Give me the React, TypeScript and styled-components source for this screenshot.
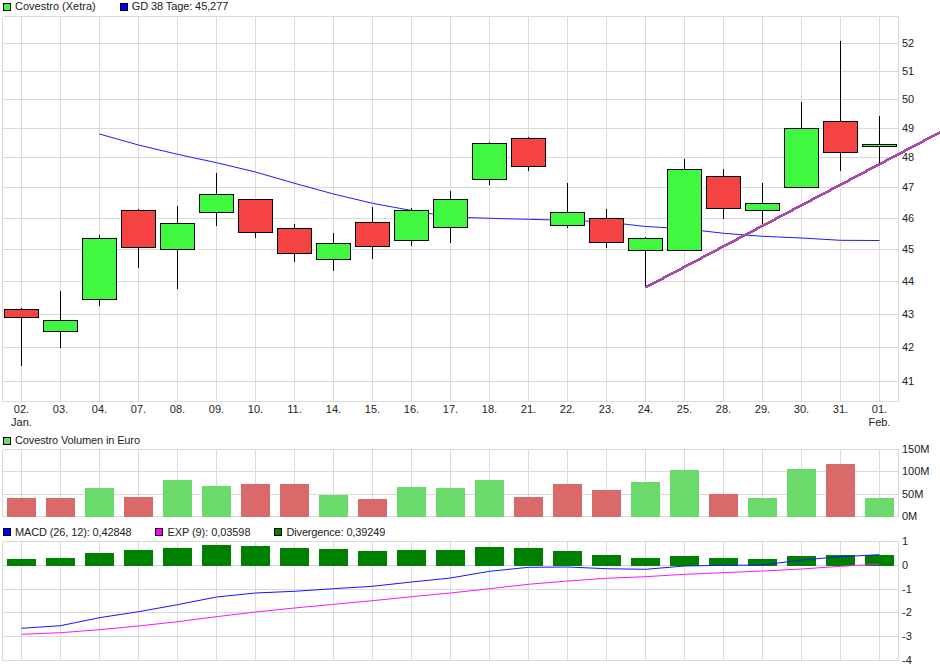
import * as React from 'react';
import styled, { createGlobalStyle } from 'styled-components';

const GlobalStyle = createGlobalStyle`
  html, body {
    margin: 0;
    padding: 0;
    background: #fff;
  }
  body {
    font-family: "Liberation Sans", Arial, sans-serif;
    font-size: 11px;
    color: #222;
  }
`;

const Page = styled.div`
  display: flex;
  flex-direction: column;
  width: 940px;
  height: 670px;
  overflow: hidden;
`;

const Legend = styled.div<{ $height: number; $after: number }>`
  display: flex;
  align-items: center;
  gap: 24px;
  height: ${p => p.$height}px;
  margin-bottom: ${p => p.$after}px;
  padding-left: 3px;
  line-height: 13px;
`;

const LegendItem = styled.div<{ $tracking?: number }>`
  display: flex;
  align-items: center;
  gap: 4px;
  white-space: nowrap;
  letter-spacing: ${p => p.$tracking ?? 0}px;
`;

const Swatch = styled.span<{ $color: string }>`
  display: block;
  box-sizing: border-box;
  width: 8px;
  height: 8px;
  background: ${p => p.$color};
  outline: 1px solid #000;
  outline-offset: -1px;
`;

const Plot = styled.svg`
  display: block;
  width: 940px;
  overflow: visible;
  flex: none;
`;

const GridLine = styled.line`
  stroke: #dbdbdb;
  stroke-width: 1;
  shape-rendering: crispEdges;
`;

const AxisLabel = styled.text`
  font-family: "Liberation Sans", Arial, sans-serif;
  font-size: 11px;
  fill: #222;
`;

const DateLabel = styled(AxisLabel)`
  text-anchor: middle;
`;

const Wick = styled.line`
  stroke: #000;
  stroke-width: 1;
  shape-rendering: crispEdges;
`;

const Body = styled.rect<{ $up: boolean }>`
  fill: ${p => (p.$up ? '#40f840' : '#f54242')};
  stroke: #000;
  stroke-width: 1;
  shape-rendering: crispEdges;
`;

const Bar = styled.rect<{ $color: string }>`
  fill: ${p => p.$color};
  shape-rendering: crispEdges;
`;

const Curve = styled.polyline<{ $color: string }>`
  fill: none;
  stroke: ${p => p.$color};
  stroke-width: 1;
  stroke-linejoin: round;
`;

const TrendLine = styled.line`
  stroke: #a64ca8;
  stroke-width: 2.7;
  shape-rendering: crispEdges;
`;

const SLOTS = 23;
const slotX = (i: number) => 21.5 + 39 * i;
const LEFT = 2.5;
const RIGHT = 898.5;

const DAYS = ['02.', '03.', '04.', '07.', '08.', '09.', '10.', '11.', '14.', '15.', '16.', '17.', '18.', '21.', '22.', '23.', '24.', '25.', '28.', '29.', '30.', '31.', '01.'];

// high, low, body top, body bottom, up
const CANDLES: [number, number, number, number, boolean][] = [
  [308, 366, 309.5, 317.5, false],
  [291, 348, 320.5, 331.5, true],
  [235, 306, 238.5, 299.5, true],
  [209, 268, 210.5, 247.5, false],
  [206, 289, 223.5, 249.5, true],
  [173, 226, 194.5, 212.5, true],
  [199, 238, 199.5, 232.5, false],
  [224, 262, 228.5, 253.5, false],
  [233, 271, 243.5, 259.5, true],
  [207, 259, 222.5, 246.5, false],
  [208, 246, 210.5, 240.5, true],
  [191, 243, 199.5, 227.5, true],
  [142, 185, 143.5, 179.5, true],
  [137, 171, 138.5, 166.5, false],
  [183, 228, 212.5, 225.5, true],
  [209, 248, 218.5, 242.5, false],
  [237, 287, 238.5, 250.5, true],
  [159, 250, 169.5, 250.5, true],
  [169, 219, 176.5, 208.5, false],
  [183, 224, 203.5, 210.5, true],
  [102, 187, 128.5, 187.5, true],
  [41, 171, 121.5, 152.5, false],
  [116, 163, 144.5, 146.5, true]
];

const AVERAGE = [134, 145, 154.3, 162.7, 172, 183.3, 194, 203.3, 210.5, 217, 218.3, 219.3, 220.3, 222, 226.5, 228.7, 233.3, 236.3, 238, 240.3, 240.5];

const VOLUME: [number, boolean][] = [
  [498, false], [498, false], [488, true], [497, false], [480, true], [486, true], [484, false], [484, false],
  [495, true], [499, false], [487, true], [488, true], [480, true], [497, false], [484, false], [490, false],
  [482, true], [470, true], [494, false], [498, true], [469, true], [464, false], [498, true]
];

const DIVERGENCE = [559, 558, 553, 550, 548, 545, 546, 548, 549, 551, 550, 550, 547, 548, 551, 555, 558, 556, 558, 559, 556, 555, 555];

const MACD = [628.3, 625.7, 617.7, 611.7, 604.7, 597, 593, 591.3, 588.7, 586.3, 582, 578, 571.3, 567.3, 567, 568.7, 569.3, 566, 565.3, 565, 560, 556.7, 554.7];

const SIGNAL = [634.3, 632.7, 629.7, 626, 621.7, 616.7, 612, 608, 604.3, 600.7, 596.7, 593, 588.7, 584.3, 581, 578.3, 576.7, 574.3, 572.7, 571, 569, 566.3, 564];

const PRICE_TICKS: [string, number][] = [
  ['52', 43.5], ['51', 71.5], ['50', 99.5], ['49', 128.5], ['48', 157.5], ['47', 187.5],
  ['46', 218.5], ['45', 249.5], ['44', 281.5], ['43', 314.5], ['42', 347.5], ['41', 381.5]
];
const VOLUME_TICKS: [string, number][] = [['150M', 449.5], ['100M', 471.5], ['50M', 494.5], ['0M', 516.5]];
const MACD_TICKS: [string, number][] = [['1', 541.5], ['0', 565.5], ['-1', 589.5], ['-2', 612.5], ['-3', 636.5], ['-4', 660.5]];

const toPoints = (values: number[], firstSlot = 0) =>
  values.map((y, i) => `${slotX(i + firstSlot)},${y}`).join(' ');

interface GridProps {
  top: number;
  bottom: number;
  ticks: [string, number][];
}

const Grid = ({ top, bottom, ticks }: GridProps) => (
  <g>
    {Array.from({ length: SLOTS }, (_, i) => (
      <GridLine key={i} x1={slotX(i)} x2={slotX(i)} y1={top} y2={bottom} />
    ))}
    <GridLine x1={LEFT} x2={LEFT} y1={top} y2={bottom} />
    <GridLine x1={RIGHT} x2={RIGHT} y1={top} y2={bottom} />
    <GridLine x1={LEFT} x2={RIGHT} y1={top} y2={top} />
    <GridLine x1={LEFT} x2={RIGHT} y1={bottom} y2={bottom} />
    {ticks.map(([label, y]) => (
      <React.Fragment key={label}>
        <GridLine x1={LEFT} x2={RIGHT} y1={y} y2={y} />
        <AxisLabel x={902} y={y + 3.5}>{label}</AxisLabel>
      </React.Fragment>
    ))}
  </g>
);

const PriceChart = () => (
  <Plot viewBox="0 16 940 418" height={418}>
    <Grid top={16.5} bottom={401.5} ticks={PRICE_TICKS} />
    {DAYS.map((day, i) => (
      <DateLabel key={i} x={slotX(i)} y={413}>{day}</DateLabel>
    ))}
    <DateLabel x={slotX(0)} y={426}>Jan.</DateLabel>
    <DateLabel x={slotX(22)} y={426}>Feb.</DateLabel>
    <Curve points={toPoints(AVERAGE, 2)} $color="#1c1cff" />
    {CANDLES.map(([high, low, top, bottom, up], i) => (
      <g key={i}>
        <Wick x1={slotX(i)} x2={slotX(i)} y1={high} y2={low} />
        <Body x={slotX(i) - 17} y={top} width={34} height={bottom - top} $up={up} />
      </g>
    ))}
    <TrendLine x1={645.5} y1={287.5} x2={940} y2={132.3} />
  </Plot>
);

const VolumeChart = () => (
  <Plot viewBox="0 449 940 76" height={76}>
    <Grid top={449.5} bottom={516.5} ticks={VOLUME_TICKS} />
    {VOLUME.map(([top, up], i) => (
      <Bar key={i} x={slotX(i) - 14.5} y={top} width={29} height={517 - top} $color={up ? '#6adb6a' : '#da6a6a'} />
    ))}
  </Plot>
);

const MacdChart = () => (
  <Plot viewBox="0 541 940 129" height={129}>
    <Grid top={541.5} bottom={660.5} ticks={MACD_TICKS} />
    {DIVERGENCE.map((top, i) => (
      <Bar key={i} x={slotX(i) - 14.5} y={top} width={29} height={566 - top} $color="#008000" />
    ))}
    <Curve points={toPoints(MACD)} $color="#1414ff" />
    <Curve points={toPoints(SIGNAL)} $color="#ff14ff" />
  </Plot>
);

export default function App() {
  return (
    <Page>
      <GlobalStyle />
      <Legend $height={13} $after={3}>
        <LegendItem><Swatch $color="#40f840" />Covestro (Xetra)</LegendItem>
        <LegendItem $tracking={-0.1}><Swatch $color="#0000ff" />GD 38 Tage: 45,277</LegendItem>
      </Legend>
      <PriceChart />
      <Legend $height={13} $after={2}>
        <LegendItem $tracking={-0.12}><Swatch $color="#6adb6a" />Covestro Volumen in Euro</LegendItem>
      </Legend>
      <VolumeChart />
      <Legend $height={14} $after={2}>
        <LegendItem $tracking={-0.13}><Swatch $color="#0000ff" />MACD (26, 12): 0,42848</LegendItem>
        <LegendItem $tracking={-0.07}><Swatch $color="#ff00ff" />EXP (9): 0,03598</LegendItem>
        <LegendItem $tracking={-0.15}><Swatch $color="#008000" />Divergence: 0,39249</LegendItem>
      </Legend>
      <MacdChart />
    </Page>
  );
}
